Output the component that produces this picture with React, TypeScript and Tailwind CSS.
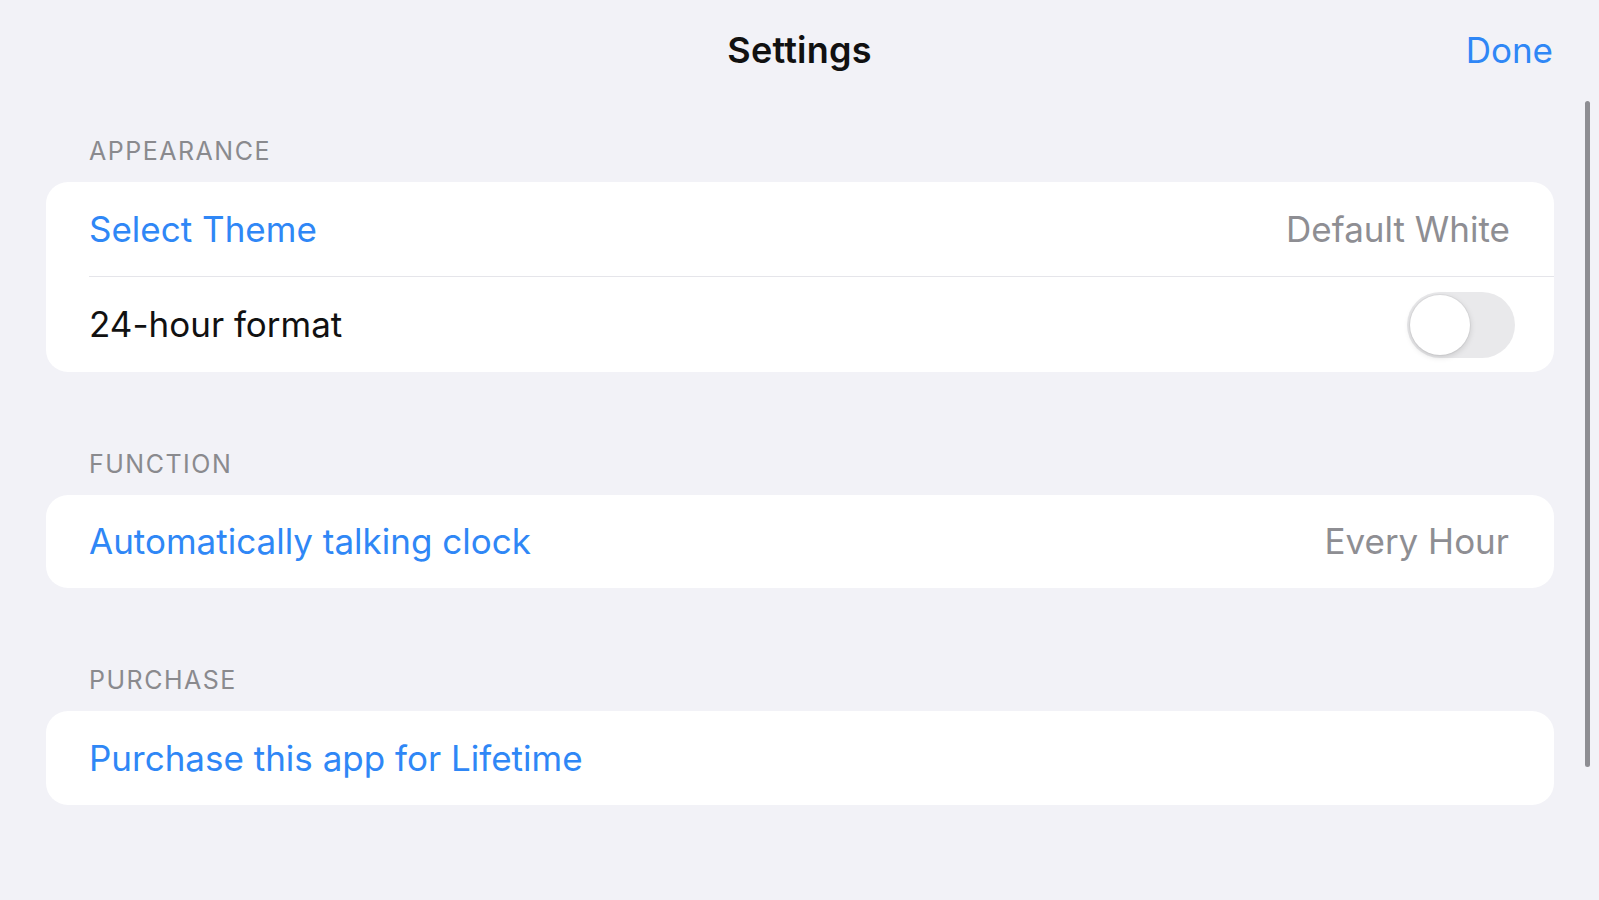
import React from "react";

const font = { fontFamily: "Inter, 'Noto Sans', 'Liberation Sans', sans-serif" };

function Toggle() {
  return (
    <div className="relative w-[108px] h-[66px] rounded-full bg-[#e9e9eb]">
      <div className="absolute left-[3px] top-[3px] w-[60px] h-[60px] rounded-full bg-white shadow-[0_2px_6px_rgba(0,0,0,0.15),0_0_0_1px_rgba(0,0,0,0.04)]" />
    </div>
  );
}

function Header({ children, first }: { children: React.ReactNode; first?: boolean }) {
  return (
    <div className={`${first ? "h-[82px]" : "h-[123px]"} flex items-end pb-[16px] pl-[43px]`}>
      <span className="text-[25px] leading-[30px] text-[#8a8a8e] tracking-[1.5px]">{children}</span>
    </div>
  );
}

export default function App() {
  return (
    <div className="relative w-[1599px] h-[900px] bg-[#f2f2f7] overflow-hidden" style={font}>
      <div className="h-[100px] flex items-center justify-center relative">
        <span className="text-[36px] font-semibold text-[#111] tracking-[0.2px]">Settings</span>
        <span className="absolute right-[46px] top-1/2 -translate-y-1/2 text-[35px] text-[#2f87f6]">Done</span>
      </div>
      <div className="absolute right-[9px] top-[101px] w-[5px] h-[666px] rounded-full bg-[#8e8e93]" />
      <div className="pl-[46px] pr-[45px]">
        <Header first>APPEARANCE</Header>
        <div className="bg-white rounded-[22px] overflow-hidden">
          <div className="h-[94px] flex items-center justify-between pl-[43px] pr-[44px]">
            <span className="text-[35px] text-[#2f87f6]">Select Theme</span>
            <span className="text-[35px] text-[#8e8e93]">Default White</span>
          </div>
          <div className="ml-[43px] h-px bg-[#e5e5ea]" />
          <div className="h-[95px] flex items-center justify-between pl-[43px] pr-[39px]">
            <span className="text-[35px] text-[#111]">24-hour format</span>
            <Toggle />
          </div>
        </div>
        <Header>FUNCTION</Header>
        <div className="bg-white rounded-[22px]">
          <div className="h-[93px] flex items-center justify-between pl-[43px] pr-[45px]">
            <span className="text-[35px] text-[#2f87f6]">Automatically talking clock</span>
            <span className="text-[35px] text-[#8e8e93]">Every Hour</span>
          </div>
        </div>
        <Header>PURCHASE</Header>
        <div className="bg-white rounded-[22px]">
          <div className="h-[94px] flex items-center pl-[43px]">
            <span className="text-[35px] text-[#2f87f6]">Purchase this app for Lifetime</span>
          </div>
        </div>
      </div>
    </div>
  );
}
